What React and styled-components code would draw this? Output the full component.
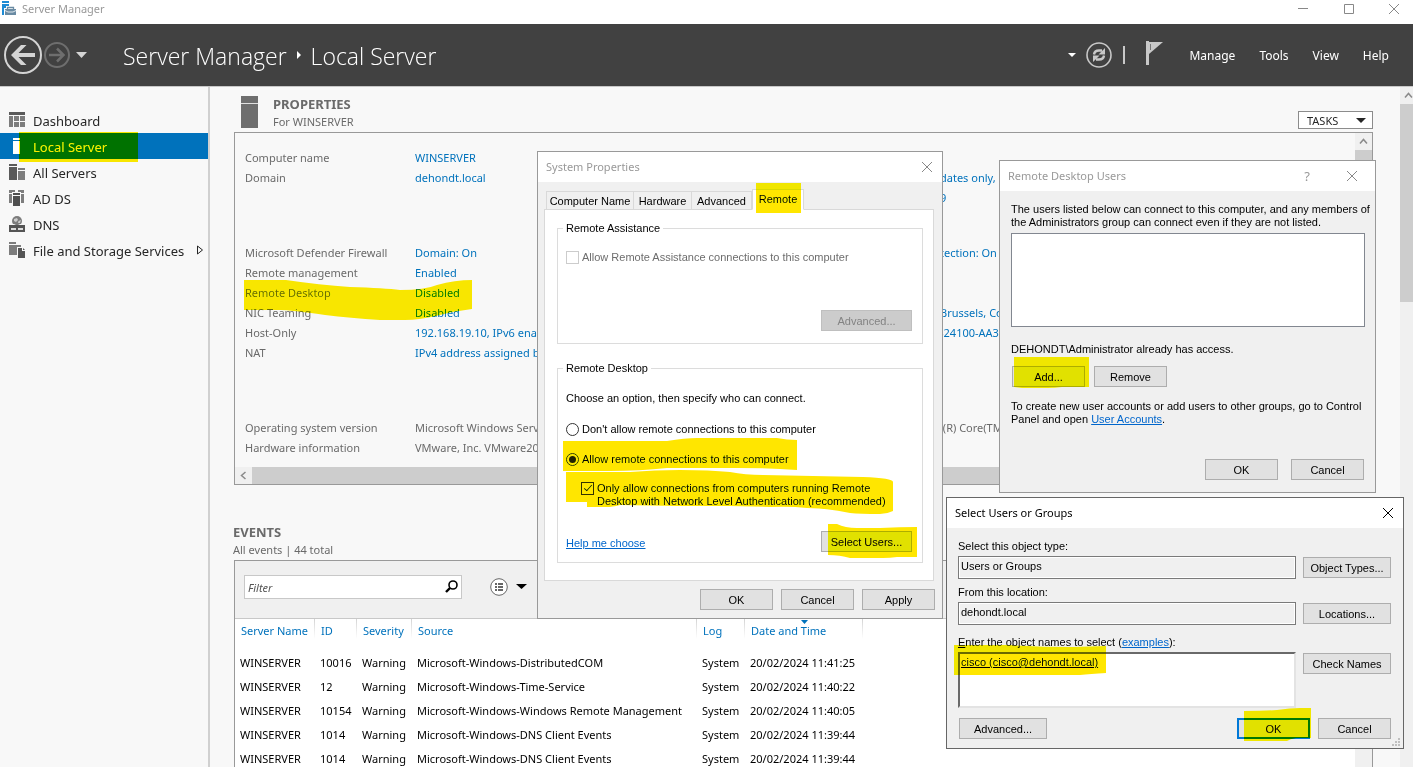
import React from "react";
import styled, { createGlobalStyle, css } from "styled-components";

const shellFont = `"Noto Sans", "Open Sans", sans-serif`;
const dialogFont = `"Liberation Sans", Arial, sans-serif`;

const Global = createGlobalStyle`
  *, *::before, *::after { box-sizing: border-box; }
  body { margin: 0; background: #fff; font-family: ${shellFont}; font-size: 11px; color: #6a6a6a; }
  button, input, textarea { font: inherit; color: inherit; margin: 0; }
  a { text-decoration: none; }
`;

/* ---------- shell ---------- */

const Desktop = styled.div`
  position: relative;
  height: 100vh;
  min-height: 600px;
  overflow: hidden;
  display: flex;
  flex-direction: column;
`;

const TitleBar = styled.div`
  height: 24px;
  flex: none;
  display: flex;
  align-items: flex-start;
  padding-left: 1px;
  background: #fff;
  color: #999;
  line-height: 18px;
  svg { display: block; }
`;

const AppName = styled.span`
  margin-left: 5px;
  flex: 1;
`;

const CaptionButton = styled.button`
  width: 46px;
  height: 18px;
  padding: 0 13px 0 0;
  border: 0;
  background: none;
  display: flex;
  align-items: center;
  justify-content: flex-end;
`;

const Header = styled.header`
  height: 63px;
  flex: none;
  display: flex;
  align-items: center;
  padding: 0 24px 0 4px;
  background: #414141;
  border-bottom: 1px solid #c8c8c8;
  color: #fff;
`;

const GlyphButton = styled.button`
  padding: 0;
  border: 0;
  background: none;
  display: block;
  margin-left: ${(p) => p.$gap || 0}px;
  svg { display: block; }
`;

const Breadcrumb = styled.h1`
  margin: 0 0 0 36px;
  flex: 1;
  display: flex;
  align-items: center;
  gap: 9px;
  font: 300 23px/30px "Open Sans", ${shellFont};
  span { padding-top: 2px; }
`;

const Menu = styled.nav`
  display: flex;
  gap: 24px;
  margin-left: 25px;
  font-size: 12px;
  a { color: #fff; }
`;

const Divider = styled.span`
  width: 2px;
  height: 18px;
  margin: 0 21px 0 11px;
  background: #c8c8c8;
`;

const Body = styled.div`
  flex: 1;
  min-height: 0;
  display: flex;
  background: #f8f8f8;
`;

const Sidebar = styled.nav`
  width: 210px;
  flex: none;
  padding-top: 20px;
  border-right: 2px solid #d0d0d0;
`;

const NavItem = styled.a`
  height: 26px;
  display: flex;
  align-items: center;
  gap: 8px;
  padding: 0 4px 0 9px;
  font-size: 13px;
  white-space: nowrap;
  color: ${(p) => (p.$active ? "#fff" : "#262626")};
  background: ${(p) => (p.$active ? "#0072bc" : "none")};
  svg { flex: none; display: block; }
  span { flex: 1; padding-top: 2px; }
`;

const Main = styled.main`
  flex: 1;
  min-width: 0;
  overflow: hidden;
  display: flex;
  flex-direction: column;
  padding: 9px 27px 0 24px;
`;

const SectionHead = styled.div`
  flex: none;
  display: flex;
  align-items: flex-start;
  gap: 15px;
  padding-left: ${(p) => (p.$indent ? 7 : 0)}px;
  height: 36px;
`;

const SectionText = styled.div`
  flex: 1;
  line-height: 18px;
  h2 { margin: 0; font-size: 13px; line-height: 17px; font-weight: 700; }
`;

const TasksButton = styled.button`
  width: 75px;
  height: 18px;
  margin-top: 15px;
  padding: 0 6px 0 8px;
  display: flex;
  align-items: center;
  justify-content: space-between;
  border: 1px solid #8c8c8c;
  background: #fff;
  color: #262626;
`;

const PropertiesPanel = styled.section`
  flex: none;
  height: 353px;
  display: grid;
  grid-template-columns: minmax(0, 1fr) 17px;
  grid-template-rows: minmax(0, 1fr) 17px;
  border: 1px solid #999;
`;

const PropertyGroups = styled.div`
  padding: 15px 0 0 10px;
  display: flex;
  flex-direction: column;
  gap: 35px;
  overflow: hidden;
  white-space: nowrap;
`;

const PropertyGroup = styled.div`
  display: grid;
  grid-template-columns: 170px 525px auto;
  grid-auto-rows: 20px;
  line-height: 20px;
`;

const Value = styled.a`
  color: ${(p) => (p.$plain ? "#6a6a6a" : "#0072bc")};
`;

const Track = styled.div`
  display: flex;
  flex-direction: ${(p) => (p.$row ? "row" : "column")};
  flex: none;
  width: ${(p) => p.$width || "auto"};
  overflow: hidden;
  background: #f0f0f0;
  svg { flex: none; display: block; }
`;

const Thumb = styled.div`
  flex: ${(p) => (p.$fill ? "1" : "0 0 198px")};
  background: #cdcdcd;
`;

const EventsHead = styled(SectionHead)`
  margin-top: 39px;
  height: 36px;
  margin-left: -1px;
`;

const EventsPanel = styled.section`
  flex: 1;
  min-height: 0;
  border: 1px solid #999;
  border-bottom: 0;
  background: #fff;
  display: flex;
  flex-direction: column;
`;

const FilterBar = styled.div`
  height: 58px;
  flex: none;
  display: flex;
  align-items: center;
  padding: 0 9px 6px;
  background: #f0f0f0;
  border-bottom: 1px solid #c8c8c8;
`;

const FilterBox = styled.label`
  width: 218px;
  height: 24px;
  display: flex;
  align-items: center;
  padding: 0 3px;
  border: 1px solid #c8c8c8;
  background: #fff;
  margin-right: 28px;
  input { flex: 1; min-width: 0; border: 0; padding: 2px 0 0; outline: 0; background: none; font-style: italic; }
  input::placeholder { color: #555; opacity: 1; }
`;

const EventsBody = styled.div`
  flex: 1;
  min-height: 0;
  display: flex;
  justify-content: space-between;
  overflow: hidden;
`;

const EventTable = styled.table`
  width: 628px;
  align-self: flex-start;
  table-layout: fixed;
  border-collapse: collapse;
  color: #000;
  white-space: nowrap;
  th { height: 31px; padding: 3px 0 0 6px; vertical-align: top; text-align: left; font-weight: 400; line-height: 18px; color: #0072bc;
    background: linear-gradient(#d4d4d4, #fff) right top / 1px 20px no-repeat; position: relative; }
  td { height: 24px; padding: 0 0 0 5px; }
  th svg { position: absolute; left: 56px; top: 1px; }
`;

/* ---------- dialogs ---------- */

const Dialog = styled.section`
  position: absolute;
  left: ${(p) => p.$x}px;
  top: ${(p) => p.$y}px;
  width: ${(p) => p.$w}px;
  display: flex;
  flex-direction: column;
  border: 1px solid ${(p) => (p.$active ? "#666" : "#999")};
  background: #f0f0f0;
  color: #000;
  font: 11px/13px ${dialogFont};
  p { white-space: nowrap; }
`;

const DialogTitle = styled.header`
  height: 30px;
  display: flex;
  align-items: center;
  padding: 0 8px;
  background: #fff;
  color: ${(p) => (p.$active ? "#000" : "#999")};
  font: 11px/16px ${shellFont};
  h2 { margin: 0; flex: 1; font: inherit; }
`;

const TitleButton = styled.button`
  width: ${(p) => p.$w || 14}px;
  height: 20px;
  padding: 0;
  border: 0;
  background: none;
  font-size: 13px;
  display: grid;
  place-items: center;
`;

const PushButton = styled.button`
  width: ${(p) => p.$w || 73}px;
  height: 21px;
  flex: none;
  padding: 1px 0 0;
  line-height: 13px;
  border: 1px solid #adadad;
  background: #e1e1e1;
  ${(p) => p.$primary && css`border: 2px solid #0078d7;`}
  &:disabled { background: #ccc; border-color: #bfbfbf; color: #838383; }
`;

const Row = styled.div`
  display: flex;
  align-items: ${(p) => p.$align || "center"};
  justify-content: ${(p) => p.$justify || "flex-start"};
  gap: ${(p) => p.$gap || 0}px;
  margin-top: ${(p) => p.$mt || 0}px;
`;

const Link = styled.a`
  color: #0066cc;
  text-decoration: underline;
`;

const HelpLink = styled(Link)`
  padding-top: 3px;
`;

const Tabs = styled.div`
  display: flex;
  align-items: flex-end;
  height: 21px;
  margin: 7px 0 -1px 8px;
`;

const Tab = styled.button`
  width: ${(p) => p.$w}px;
  height: ${(p) => (p.$active ? 21 : 19)}px;
  padding: ${(p) => (p.$active ? "0 0 1px" : "2px 0 0")};
  line-height: 13px;
  border: 1px solid #d9d9d9;
  border-bottom-color: ${(p) => (p.$active ? "#fff" : "#d9d9d9")};
  border-left-width: ${(p) => (p.$first || p.$active ? 1 : 0)}px;
  background: ${(p) => (p.$active ? "#fff" : "#f0f0f0")};
  position: relative;
  white-space: nowrap;
`;

const TabPage = styled.div`
  margin: 0 8px 0 6px;
  padding: 11px 10px 17px 12px;
  border: 1px solid #d9d9d9;
  background: #fff;
  display: flex;
  flex-direction: column;
  gap: 17px;
`;

const Group = styled.fieldset`
  margin: 0;
  min-width: 0;
  padding: 0 10px ${(p) => p.$pb}px 8px;
  border: 1px solid #dcdcdc;
  legend { margin-left: -3px; padding: 0 3px; line-height: 14px; }
  p { margin: 16px 0 0; line-height: 14px; }
`;

const Option = styled.label`
  display: flex;
  align-items: ${(p) => (p.$tall ? "flex-start" : "center")};
  gap: 3px;
  min-height: 16px;
  margin: ${(p) => p.$mt}px 0 0 ${(p) => p.$indent || 0}px;
  color: ${(p) => (p.$disabled ? "#6d6d6d" : "#000")};
`;

const Tick = styled.input`
  appearance: none;
  flex: none;
  width: 13px;
  height: 13px;
  position: relative;
  border: 1px solid #333;
  border-radius: ${(p) => (p.type === "radio" ? "50%" : 0)};
  background: #fff;
  &:disabled { border-color: #ccc; }
  &:checked::after {
    content: "";
    position: absolute;
    ${(p) =>
      p.type === "radio"
        ? css`inset: 2px; border-radius: 50%; background: #222;`
        : css`left: 4px; top: 0; width: 4px; height: 8px; border: solid #222; border-width: 0 1px 1px 0; transform: rotate(42deg);`}
  }
`;

const ButtonRow = styled(Row)`
  justify-content: flex-end;
  padding: 8px 7px 8px 0;
`;

const UsersBody = styled.div`
  padding: 12px 11px 12px;
  p { margin: 0; }
`;

const UserList = styled.div`
  height: 94px;
  margin: 4px -1px 16px 0;
  border: 1px solid #828790;
  background: #fff;
`;

const UserButtons = styled(Row)`
  padding-left: 1px;
`;

const SelectGrid = styled.div`
  padding: 11px 12px 9px 11px;
  display: grid;
  grid-template-columns: minmax(0, 1fr) 88px;
  column-gap: 7px;
  label { grid-column: 1 / -1; line-height: 14px; }
`;

const Field = styled.input`
  height: 23px;
  margin: 3px 0 6px;
  padding: 0 2px 3px;
  border: 1px solid #7a7a7a;
  background: #f0f0f0;
  box-shadow: inset 0 0 0 1px #fff;
  outline: 0;
`;

const NamesField = styled.textarea`
  height: 56px;
  margin: 3px 0 0;
  padding: 2px 1px;
  resize: none;
  overflow: hidden;
  outline: 0;
  border: 2px solid;
  border-color: #696969 #e3e3e3 #e3e3e3 #696969;
  background: #fff;
  line-height: 13px;
  text-decoration: underline;
`;

const SideButton = styled(PushButton)`
  margin-top: 4px;
`;

const Actions = styled(Row)`
  grid-column: 1 / -1;
  padding-left: 1px;
`;

const Spacer = styled.span`
  flex: 1;
`;

const Grip = styled.svg`
  position: absolute;
  right: 2px;
  bottom: 1px;
`;

const Marker = styled.svg`
  position: absolute;
  left: 0;
  top: 0;
  width: 100%;
  height: 100%;
  pointer-events: none;
  mix-blend-mode: darken;
  fill: #ffe600;
`;

/* ---------- icons ---------- */

const Cross = ({ color = "#888" }) => (
  <svg width="12" height="12" viewBox="0 0 12 12" stroke={color} fill="none"><path d="M1 1l10 10M11 1L1 11" /></svg>
);

const Caret = ({ w = 10, h = 6, fill = "#000" }) => (
  <svg width={w} height={h} viewBox={`0 0 ${w} ${h}`}><path d={`M0 0H${w}L${w / 2} ${h}z`} fill={fill} /></svg>
);

const ArrowEnd = ({ dir = "up" }) => (
  <svg width="17" height="17" viewBox="0 0 17 17" fill="none" stroke="#8a8a8a" strokeWidth="1.5">
    <path d={{ up: "M5 10.5l3.5-4 3.5 4", left: "M10.5 5l-4 3.5 4 3.5", down: "M5 7l3.5 4 3.5-4" }[dir]} />
  </svg>
);

const AppIcon = () => (
  <svg width="16" height="16" viewBox="0 0 16 16">
    <path d="M1 1h7v2H1zM1 4h7v2H5v2H3v7H1z" fill="#1e8bd4" />
    <path d="M6.500 9V7.500h6V9" fill="none" stroke="#6a8ba3" strokeWidth="1.300" />
    <path d="M4 9h11v6H4z" fill="#6a8ba3" />
    <path d="M4 10.500l3 1.500h5l3-1.500" fill="none" stroke="#fff" strokeWidth=".8" />
  </svg>
);

const navIcons = {
  dashboard: (
    <>
      <path d="M0 0h16v3H0z" fill="#5a5a5a" />
      <path d="M0 4h4v11H0zM5 4h5v5H5zM11 4h5v5h-5zM5 10h5v5H5zM11 10h5v5h-5z" fill="#7d7d7d" />
    </>
  ),
  local: <path d="M4 0h7v2H4zM4 3h7v13H4z" fill="#fff" />,
  all: (
    <>
      <path d="M0 0h8v2H0zM0 3h8v13H0z" fill="#5a5a5a" />
      <path d="M9 4h7v2H9zM9 7h7v9H9z" fill="#7d7d7d" />
    </>
  ),
  adds: (
    <>
      <path d="M0 0h6v2H3v1H0zM9 0h6v3h-3V2H9zM0 4h3v9H0zM12 4h3v9h-3z" fill="#7d7d7d" />
      <path d="M4 3h7v2H4zM4 6h7v10H4z" fill="#4f4f4f" />
    </>
  ),
  dns: (
    <>
      <circle cx="8" cy="5" r="5" fill="#7d7d7d" />
      <path d="M5 3l3-1 1 2-2 2-2-1zM9.500 5l2.500-1-1 3h-2z" fill="#ccc" />
      <path d="M0 8h5l2 1h2l2-1h5v1H0z" fill="#f8f8f8" />
      <path d="M0 9h16v7H0z" fill="#555" />
      <path d="M2 12h5v2H2zM9 12h5v2H9z" fill="#ddd" />
    </>
  ),
  storage: (
    <>
      <path d="M0 0h7v2H0zM0 3h12v2H8v8H0z" fill="#7d7d7d" />
      <path d="M9 6h4v3h3v7H9z" fill="#555" />
      <path d="M14 6l2 2h-2z" fill="#555" />
      <path d="M8.500 15V5.500h5v3h2" fill="none" stroke="#f8f8f8" />
    </>
  ),
};

const NavIcon = ({ name }) => <svg width="16" height="16" viewBox="0 0 16 16">{navIcons[name]}</svg>;

/* ---------- data ---------- */

const navItems = [
  ["dashboard", "Dashboard"],
  ["local", "Local Server"],
  ["all", "All Servers"],
  ["adds", "AD DS"],
  ["dns", "DNS"],
  ["storage", "File and Storage Services"],
];

const propertyGroups = [
  {
    rows: [
      ["Computer name", "WINSERVER", ""],
      ["Domain", "dehondt.local", "dates only,"],
      ["", "", "9"],
    ],
  },
  {
    rows: [
      ["Microsoft Defender Firewall", "Domain: On", "tection: On"],
      ["Remote management", "Enabled", ""],
      ["Remote Desktop", "Disabled", ""],
      ["NIC Teaming", "Disabled", "Brussels, Co"],
      ["Host-Only", "192.168.19.10, IPv6 enab", "-24100-AA3"],
      ["NAT", "IPv4 address assigned b", ""],
      ["", "", ""],
    ],
  },
  {
    plain: true,
    rows: [
      ["Operating system version", "Microsoft Windows Serv", "l(R) Core(TM"],
      ["Hardware information", "VMware, Inc. VMware20,", ""],
    ],
  },
];

const eventColumns = [
  ["Server Name", 80],
  ["ID", 42],
  ["Severity", 55],
  ["Source", 285],
  ["Log", 48],
  ["Date and Time", 118],
];

const events = [
  ["WINSERVER", "10016", "Warning", "Microsoft-Windows-DistributedCOM", "System", "20/02/2024 11:41:25"],
  ["WINSERVER", "12", "Warning", "Microsoft-Windows-Time-Service", "System", "20/02/2024 11:40:22"],
  ["WINSERVER", "10154", "Warning", "Microsoft-Windows-Windows Remote Management", "System", "20/02/2024 11:40:05"],
  ["WINSERVER", "1014", "Warning", "Microsoft-Windows-DNS Client Events", "System", "20/02/2024 11:39:44"],
  ["WINSERVER", "1014", "Warning", "Microsoft-Windows-DNS Client Events", "System", "20/02/2024 11:39:44"],
];

const strokes = [
  "M19 132H138V162H19z",
  "M244 280H286Q320 285 350 287Q385 288 400 290Q425 290 437 285Q455 280 472 280V309Q455 311 440 315Q420 320 405 320H380Q350 318 325 315Q290 310 280 310H244z",
  "M756 183H801V213H756z",
  "M563 441H667Q685 438 697 438H777Q787 440 797 440V470Q770 468 737 468H667Q640 471 610 471H563z",
  "M566 472H630Q655 470 680 470Q710 470 730 472Q745 475 763 475L863 477Q893 478 893 482V511Q887 514 880 514Q860 514 850 513Q825 508 807 508Q790 506 770 507L730 506H677L620 505Q612 507 607 507H587V502H566z",
  "M828 524H837Q845 528 857 528H880Q900 527 917 527V557H897Q890 558 883 558H850Q840 555 828 555z",
  "M1014 357H1089V387H1062Q1055 388 1048 388H1022L1014 387z",
  "M954 645H1010Q1040 647 1073 647L1106 646V673Q1090 674 1080 675H954z",
  "M1244 711Q1265 711 1277 710Q1290 708 1300 708H1311V738H1296Q1290 739 1287 741H1244z",
];

/* ---------- screens ---------- */

function ServerManager() {
  return (
    <>
      <TitleBar>
        <AppIcon />
        <AppName>Server Manager</AppName>
        <CaptionButton aria-label="Minimize">
          <svg width="10" height="10" stroke="#888"><path d="M0 4.500h10" /></svg>
        </CaptionButton>
        <CaptionButton aria-label="Maximize">
          <svg width="10" height="10" stroke="#888" fill="none"><path d="M.5.5h9v9h-9z" /></svg>
        </CaptionButton>
        <CaptionButton aria-label="Close"><Cross /></CaptionButton>
      </TitleBar>
      <Header>
        <GlyphButton aria-label="Back">
          <svg width="38" height="38" viewBox="0 0 38 38" fill="none" stroke="#d4d4d4">
            <circle cx="19" cy="19" r="18" strokeWidth="2" />
            <path d="M31 19H10" strokeWidth="4" />
            <path d="M22.500 9h-5.500L7 19l10 10h5.500L12.500 19z" fill="#d4d4d4" stroke="none" />
          </svg>
        </GlyphButton>
        <GlyphButton $gap={2} aria-label="Forward">
          <svg width="26" height="26" viewBox="0 0 26 26" fill="none" stroke="#6e6e6e">
            <circle cx="13" cy="13" r="12" strokeWidth="2" />
            <path d="M5 13h14M13 6.500l6.500 6.500-6.500 6.500" strokeWidth="2.500" />
          </svg>
        </GlyphButton>
        <GlyphButton $gap={6} aria-label="History"><Caret w={11} h={6} fill="#d4d4d4" /></GlyphButton>
        <Breadcrumb>
          <span>Server Manager</span>
          <svg width="6" height="8"><path d="M1 0l4 4-4 4z" fill="#fff" /></svg>
          <span>Local Server</span>
        </Breadcrumb>
        <GlyphButton aria-label="Refresh options"><Caret w={8} h={4} fill="#fff" /></GlyphButton>
        <GlyphButton $gap={10} aria-label="Refresh">
          <svg width="26" height="26" viewBox="0 0 26 26" fill="none" stroke="#c8c8c8">
            <circle cx="13" cy="13" r="12" strokeWidth="1.600" />
            <path d="M8 12.500Q8.500 8.500 13 8.500h3M18 13.500Q17.500 17.500 13 17.500h-3" strokeWidth="2.400" />
            <path d="M19 6v6.500h-6.500zM7 20v-6.500h6.500z" fill="#c8c8c8" stroke="none" />
          </svg>
        </GlyphButton>
        <Divider />
        <GlyphButton aria-label="Notifications">
          <svg width="18" height="28" viewBox="0 0 18 28">
            <path d="M0 0h3v24H0z" fill="#c8c8c8" />
            <path d="M3 1h14L3 13z" fill="#c8c8c8" />
            <path d="M4.500 3v6" stroke="#777" fill="none" />
          </svg>
        </GlyphButton>
        <Menu>
          <a href="#manage">Manage</a>
          <a href="#tools">Tools</a>
          <a href="#view">View</a>
          <a href="#help">Help</a>
        </Menu>
      </Header>
      <Body>
        <Sidebar>
          {navItems.map(([icon, label]) => (
            <NavItem key={icon} href={`#${icon}`} $active={icon === "local"}>
              <NavIcon name={icon} />
              <span>{label}</span>
              {icon === "storage" && (
                <svg width="8" height="10" fill="none" stroke="#262626"><path d="M1.500 1l5 4-5 4z" /></svg>
              )}
            </NavItem>
          ))}
        </Sidebar>
        <Main>
          <SectionHead $indent>
            <svg width="17" height="32"><path d="M0 0h17v32H0z" fill="#6e6e6e" /><path d="M0 7.500h17" stroke="#e0e0e0" strokeWidth="1" /></svg>
            <SectionText>
              <h2>PROPERTIES</h2>
              For WINSERVER
            </SectionText>
            <TasksButton>TASKS <Caret w={10} h={5} fill="#262626" /></TasksButton>
          </SectionHead>
          <PropertiesPanel>
            <PropertyGroups>
              {propertyGroups.map((group, g) => (
                <PropertyGroup key={g}>
                  {group.rows.map(([name, left, right], i) => (
                    <React.Fragment key={i}>
                      <span>{name}</span>
                      <Value as={group.plain ? "span" : "a"} $plain={group.plain} href={group.plain ? undefined : "#edit"}>{left}</Value>
                      <Value as={group.plain ? "span" : "a"} $plain={group.plain} href={group.plain ? undefined : "#edit"}>{right}</Value>
                    </React.Fragment>
                  ))}
                </PropertyGroup>
              ))}
            </PropertyGroups>
            <Track><ArrowEnd /><Thumb $fill /></Track>
            <Track $row><ArrowEnd dir="left" /><Thumb $fill /></Track>
          </PropertiesPanel>
          <EventsHead>
            <SectionText>
              <h2>EVENTS</h2>
              All events | 44 total
            </SectionText>
          </EventsHead>
          <EventsPanel>
            <FilterBar>
              <FilterBox>
                <input placeholder="Filter" aria-label="Filter" />
                <svg width="13" height="13" viewBox="0 0 13 13" fill="none" stroke="#000"><circle cx="8" cy="5" r="4" strokeWidth="1.600" /><path d="M5 8L1 12" strokeWidth="2.400" /></svg>
              </FilterBox>
              <GlyphButton aria-label="Criteria">
                <svg width="18" height="18" viewBox="0 0 18 18" fill="none" stroke="#666">
                  <circle cx="9" cy="9" r="8.300" fill="#fff" />
                  <path d="M5 6h2M5 9h2M5 12h2M8 6h5M8 9h5M8 12h5" strokeWidth="2" />
                </svg>
              </GlyphButton>
              <GlyphButton $gap={8} aria-label="More criteria"><Caret w={11} h={5} /></GlyphButton>
            </FilterBar>
            <EventsBody>
              <EventTable>
                <colgroup>{eventColumns.map(([name, w]) => <col key={name} width={w} />)}</colgroup>
                <thead>
                  <tr>
                    {eventColumns.map(([name]) => (
                      <th key={name}>{name}{name === "Date and Time" && <svg width="7" height="4"><path d="M0 0h7L3.500 4z" fill="#0072bc" /></svg>}</th>
                    ))}
                  </tr>
                </thead>
                <tbody>
                  {events.map((row, i) => <tr key={i}>{row.map((cell, c) => <td key={c}>{cell}</td>)}</tr>)}
                </tbody>
              </EventTable>
              <Track $width="17px" />
            </EventsBody>
          </EventsPanel>
        </Main>
        <Track $width="13px"><ArrowEnd /><Thumb /></Track>
      </Body>
    </>
  );
}

function SystemProperties() {
  return (
    <Dialog $x={537} $y={151} $w={406}>
      <DialogTitle>
        <h2>System Properties</h2>
        <TitleButton aria-label="Close"><Cross /></TitleButton>
      </DialogTitle>
      <Tabs>
        <Tab $w={88} $first>Computer Name</Tab>
        <Tab $w={58}>Hardware</Tab>
        <Tab $w={60}>Advanced</Tab>
        <Tab $w={52} $active>Remote</Tab>
      </Tabs>
      <TabPage>
        <Group $pb={12}>
          <legend>Remote Assistance</legend>
          <Option $mt={14} $disabled><Tick type="checkbox" disabled /> Allow Remote Assistance connections to this computer</Option>
          <Row $justify="flex-end" $mt={45}><PushButton $w={91} disabled>Advanced...</PushButton></Row>
        </Group>
        <Group $pb={10}>
          <legend>Remote Desktop</legend>
          <p>Choose an option, then specify who can connect.</p>
          <Option $mt={16}><Tick type="radio" name="remote" /> Don't allow remote connections to this computer</Option>
          <Option $mt={14}><Tick type="radio" name="remote" defaultChecked /> Allow remote connections to this computer</Option>
          <Option $mt={15} $indent={15} $tall>
            <Tick type="checkbox" defaultChecked />
            <span>Only allow connections from computers running Remote<br />Desktop with Network Level Authentication (recommended)</span>
          </Option>
          <Row $justify="space-between" $mt={23}>
            <HelpLink href="#help">Help me choose</HelpLink>
            <PushButton $w={91}>Select Users...</PushButton>
          </Row>
        </Group>
      </TabPage>
      <ButtonRow $gap={8}>
        <PushButton>OK</PushButton>
        <PushButton>Cancel</PushButton>
        <PushButton>Apply</PushButton>
      </ButtonRow>
    </Dialog>
  );
}

function RemoteDesktopUsers() {
  return (
    <Dialog $x={999} $y={160} $w={377}>
      <DialogTitle>
        <h2>Remote Desktop Users</h2>
        <TitleButton $w={60} aria-label="Help">?</TitleButton>
        <TitleButton $w={30} aria-label="Close"><Cross /></TitleButton>
      </DialogTitle>
      <UsersBody>
        <p>The users listed below can connect to this computer, and any members of<br />the Administrators group can connect even if they are not listed.</p>
        <UserList role="listbox" aria-label="Users" />
        <p>DEHONDT\Administrator already has access.</p>
        <UserButtons $gap={9} $mt={10}>
          <PushButton>Add...</PushButton>
          <PushButton>Remove</PushButton>
        </UserButtons>
        <Row $mt={13}>
          <p>To create new user accounts or add users to other groups, go to Control<br />Panel and open <Link href="#accounts">User Accounts</Link>.</p>
        </Row>
        <Row $gap={13} $mt={33} $justify="flex-end">
          <PushButton>OK</PushButton>
          <PushButton>Cancel</PushButton>
        </Row>
      </UsersBody>
    </Dialog>
  );
}

function SelectUsers() {
  return (
    <Dialog $x={946} $y={497} $w={458} $active>
      <DialogTitle $active>
        <h2>Select Users or Groups</h2>
        <TitleButton aria-label="Close"><Cross color="#000" /></TitleButton>
      </DialogTitle>
      <SelectGrid>
        <label htmlFor="type">Select this object type:</label>
        <Field id="type" readOnly value="Users or Groups" />
        <SideButton $w={88}>Object Types...</SideButton>
        <label htmlFor="location">From this location:</label>
        <Field id="location" readOnly value="dehondt.local" />
        <SideButton $w={88}>Locations...</SideButton>
        <Row $mt={4}><label htmlFor="names"><u>E</u>nter the object names to select (<Link href="#examples">examples</Link>):</label></Row>
        <span />
        <NamesField id="names" defaultValue="cisco (cisco@dehondt.local)" />
        <SideButton $w={88}>Check Names</SideButton>
        <Actions $mt={10} $gap={8}>
          <PushButton $w={88}>Advanced...</PushButton>
          <Spacer />
          <PushButton $primary>OK</PushButton>
          <PushButton>Cancel</PushButton>
        </Actions>
      </SelectGrid>
      <Grip width="9" height="9" viewBox="0 0 9 9"><path d="M6 0h2v2H6zM3 3h2v2H3zM6 3h2v2H6zM0 6h2v2H0zM3 6h2v2H3zM6 6h2v2H6z" fill="#bfbfbf" /></Grip>
    </Dialog>
  );
}

export default function App() {
  return (
    <Desktop>
      <Global />
      <ServerManager />
      <SystemProperties />
      <RemoteDesktopUsers />
      <SelectUsers />
      <Marker aria-hidden="true">
        {strokes.map((d) => <path key={d} d={d} />)}
      </Marker>
    </Desktop>
  );
}
